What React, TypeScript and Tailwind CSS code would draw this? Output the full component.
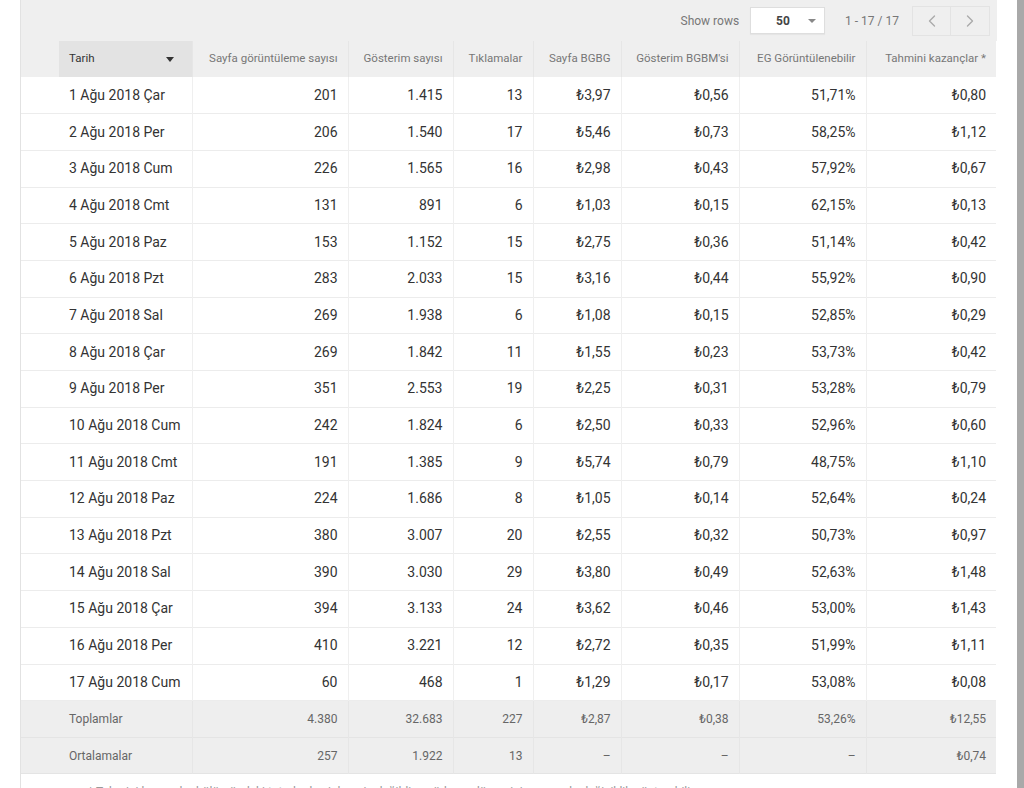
import { ChevronLeft, ChevronRight } from "lucide-react";

type Row = {
  date: string;
  views: string;
  impressions: string;
  clicks: string;
  pageRpm: string;
  impRpm: string;
  viewable: string;
  earnings: string;
};

const rows: Row[] = [
  { date: "1 Ağu 2018 Çar", views: "201", impressions: "1.415", clicks: "13", pageRpm: "₺3,97", impRpm: "₺0,56", viewable: "51,71%", earnings: "₺0,80" },
  { date: "2 Ağu 2018 Per", views: "206", impressions: "1.540", clicks: "17", pageRpm: "₺5,46", impRpm: "₺0,73", viewable: "58,25%", earnings: "₺1,12" },
  { date: "3 Ağu 2018 Cum", views: "226", impressions: "1.565", clicks: "16", pageRpm: "₺2,98", impRpm: "₺0,43", viewable: "57,92%", earnings: "₺0,67" },
  { date: "4 Ağu 2018 Cmt", views: "131", impressions: "891", clicks: "6", pageRpm: "₺1,03", impRpm: "₺0,15", viewable: "62,15%", earnings: "₺0,13" },
  { date: "5 Ağu 2018 Paz", views: "153", impressions: "1.152", clicks: "15", pageRpm: "₺2,75", impRpm: "₺0,36", viewable: "51,14%", earnings: "₺0,42" },
  { date: "6 Ağu 2018 Pzt", views: "283", impressions: "2.033", clicks: "15", pageRpm: "₺3,16", impRpm: "₺0,44", viewable: "55,92%", earnings: "₺0,90" },
  { date: "7 Ağu 2018 Sal", views: "269", impressions: "1.938", clicks: "6", pageRpm: "₺1,08", impRpm: "₺0,15", viewable: "52,85%", earnings: "₺0,29" },
  { date: "8 Ağu 2018 Çar", views: "269", impressions: "1.842", clicks: "11", pageRpm: "₺1,55", impRpm: "₺0,23", viewable: "53,73%", earnings: "₺0,42" },
  { date: "9 Ağu 2018 Per", views: "351", impressions: "2.553", clicks: "19", pageRpm: "₺2,25", impRpm: "₺0,31", viewable: "53,28%", earnings: "₺0,79" },
  { date: "10 Ağu 2018 Cum", views: "242", impressions: "1.824", clicks: "6", pageRpm: "₺2,50", impRpm: "₺0,33", viewable: "52,96%", earnings: "₺0,60" },
  { date: "11 Ağu 2018 Cmt", views: "191", impressions: "1.385", clicks: "9", pageRpm: "₺5,74", impRpm: "₺0,79", viewable: "48,75%", earnings: "₺1,10" },
  { date: "12 Ağu 2018 Paz", views: "224", impressions: "1.686", clicks: "8", pageRpm: "₺1,05", impRpm: "₺0,14", viewable: "52,64%", earnings: "₺0,24" },
  { date: "13 Ağu 2018 Pzt", views: "380", impressions: "3.007", clicks: "20", pageRpm: "₺2,55", impRpm: "₺0,32", viewable: "50,73%", earnings: "₺0,97" },
  { date: "14 Ağu 2018 Sal", views: "390", impressions: "3.030", clicks: "29", pageRpm: "₺3,80", impRpm: "₺0,49", viewable: "52,63%", earnings: "₺1,48" },
  { date: "15 Ağu 2018 Çar", views: "394", impressions: "3.133", clicks: "24", pageRpm: "₺3,62", impRpm: "₺0,46", viewable: "53,00%", earnings: "₺1,43" },
  { date: "16 Ağu 2018 Per", views: "410", impressions: "3.221", clicks: "12", pageRpm: "₺2,72", impRpm: "₺0,35", viewable: "51,99%", earnings: "₺1,11" },
  { date: "17 Ağu 2018 Cum", views: "60", impressions: "468", clicks: "1", pageRpm: "₺1,29", impRpm: "₺0,17", viewable: "53,08%", earnings: "₺0,08" },
];

const summary: Row[] = [
  { date: "Toplamlar", views: "4.380", impressions: "32.683", clicks: "227", pageRpm: "₺2,87", impRpm: "₺0,38", viewable: "53,26%", earnings: "₺12,55" },
  { date: "Ortalamalar", views: "257", impressions: "1.922", clicks: "13", pageRpm: "–", impRpm: "–", viewable: "–", earnings: "₺0,74" },
];

const headers = [
  "Sayfa görüntüleme sayısı",
  "Gösterim sayısı",
  "Tıklamalar",
  "Sayfa BGBG",
  "Gösterim BGBM'si",
  "EG Görüntülenebilir",
  "Tahmini kazançlar *",
];

// column widths in px, the first one is the empty gutter before "Tarih"
const widths = ["w-[38px]", "w-[133px]", "w-[156px]", "w-[105px]", "w-[80px]", "w-[88px]", "w-[118px]", "w-[127px]", "w-[130px]"];

function values(r: Row) {
  return [r.views, r.impressions, r.clicks, r.pageRpm, r.impRpm, r.viewable, r.earnings];
}

export default function App() {
  return (
    <div className="flex w-[1024px] h-[788px] overflow-hidden bg-white font-['Roboto','Liberation_Sans',sans-serif]">
      {/* left page edge */}
      <div className="w-[21px] shrink-0 border-r border-[#e2e2e2] bg-white" />

      <div className="flex w-[976px] shrink-0 flex-col">
        {/* toolbar */}
        <div className="flex h-[41px] shrink-0 items-center justify-end bg-[#efefef] pr-[7px] text-[12px] text-[#777]">
          <span className="mr-[11px]">Show rows</span>
          <div className="flex h-[27px] w-[75px] items-center justify-between border border-[#dedede] bg-white pl-[25px] pr-[8px] shadow-[0_1px_1px_rgba(0,0,0,0.04)]">
            <span className="font-bold text-[#444]">50</span>
            <span className="h-0 w-0 border-x-[4px] border-t-[4px] border-x-transparent border-t-[#888]" />
          </div>
          <span className="ml-[20px] mr-[13px]">1 - 17 / 17</span>
          <div className="flex h-[30px] border border-[#e3e3e3]">
            <button className="flex w-[38px] items-center justify-center border-r border-[#e3e3e3] text-[#aaa]">
              <ChevronLeft className="h-5 w-5" strokeWidth={1.6} />
            </button>
            <button className="flex w-[38px] items-center justify-center text-[#aaa]">
              <ChevronRight className="h-5 w-5" strokeWidth={1.6} />
            </button>
          </div>
        </div>

        <table className="w-[975px] shrink-0 table-fixed border-collapse">
          <thead>
            <tr className="h-[36px] bg-[#efefef] text-[11.5px] text-[#777]">
              <th className={`${widths[0]} p-0`} />
              <th className={`${widths[1]} bg-[#e3e3e3] px-[10px] text-left font-normal text-[#333]`}>
                <div className="flex items-center justify-between pr-[8px]">
                  <span>Tarih</span>
                  <span className="h-0 w-0 border-x-[4px] border-t-[5px] border-x-transparent border-t-[#333]" />
                </div>
              </th>
              {headers.map((h, i) => (
                <th
                  key={h}
                  className={`${widths[i + 2]} whitespace-nowrap border-l border-[#e6e6e6] px-[10px] text-right font-normal`}
                >
                  {h}
                </th>
              ))}
            </tr>
          </thead>
          <tbody>
            {rows.map((r) => (
              <tr key={r.date} className="h-[36.7px] border-b border-[#ececec] bg-white text-[14px] text-[#333]">
                <td className="p-0" />
                <td className="whitespace-nowrap px-[10px]">{r.date}</td>
                {values(r).map((v, i) => (
                  <td key={i} className="border-l border-[#efefef] px-[10px] text-right">
                    {v}
                  </td>
                ))}
              </tr>
            ))}
            {summary.map((r) => (
              <tr key={r.date} className="h-[36.6px] border-b border-[#e4e4e4] bg-[#eeeeee] text-[12px] text-[#666]">
                <td className="p-0" />
                <td className="px-[10px]">{r.date}</td>
                {values(r).map((v, i) => (
                  <td key={i} className="border-l border-[#e6e6e6] px-[10px] text-right">
                    {v}
                  </td>
                ))}
              </tr>
            ))}
          </tbody>
        </table>

        <p className="ml-[67px] mt-[9px] shrink-0 whitespace-nowrap text-[12px] text-[#999]">
          * Tahmini kazançlar bölümündeki tutarlar kesinleşmiş değildir ve ödeme döneminin sonunda değişiklik gösterebilir.
        </p>
      </div>

      {/* right page margin + scrollbar */}
      <div className="w-[20px] shrink-0 bg-white" />
      <div className="w-[7px] shrink-0 bg-[#a9a9a9]" />
    </div>
  );
}
